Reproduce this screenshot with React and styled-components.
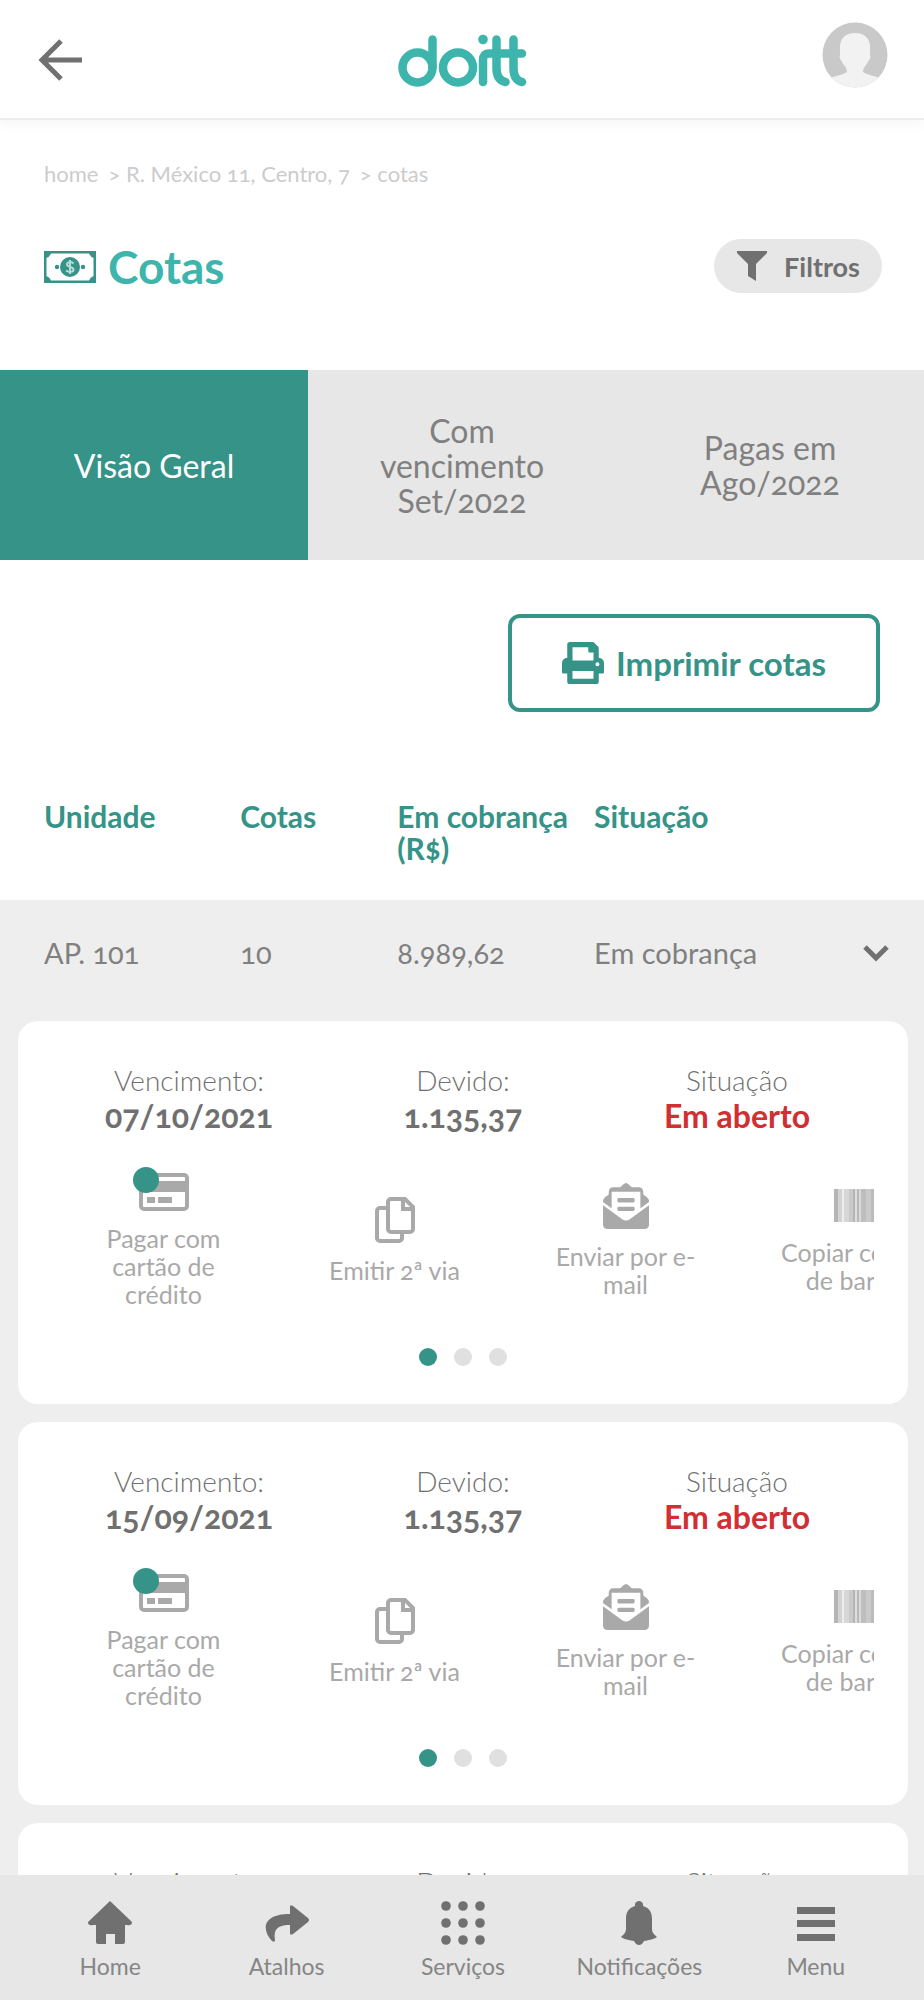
import React from 'react';
import styled, { createGlobalStyle } from 'styled-components';

const GlobalStyle = createGlobalStyle`
  * { box-sizing: border-box; }

  body {
    margin: 0;
    background: #fff;
    color: #707070;
    font-family: Lato, "Open Sans", sans-serif;
    font-variant-numeric: oldstyle-nums;
  }

  button {
    font-family: inherit;
    font-variant-numeric: inherit;
    cursor: pointer;
  }
`;

const Page = styled.div`
  height: 100vh;
  display: flex;
  flex-direction: column;
  overflow: hidden;
`;

const Header = styled.header`
  flex: none;
  height: 120px;
  padding: 4px 36px 0;
  display: grid;
  grid-template-columns: 1fr auto 1fr;
  align-items: center;
  border-bottom: 2px solid #ececec;
  box-shadow: 0 4px 12px rgba(0, 0, 0, 0.04);
`;

const IconButton = styled.button`
  display: flex;
  width: max-content;
  padding: 0;
  border: 0;
  background: none;
  color: inherit;
`;

const ProfileButton = styled(IconButton)`
  justify-self: end;
  margin-bottom: 12px;
`;

const Content = styled.main`
  flex: 1;
  min-height: 0;
  overflow: hidden;
`;

const Breadcrumb = styled.nav`
  display: flex;
  gap: 10px;
  padding: 38px 44px 0;
  font-size: 22px;
  font-weight: 400;
  line-height: 32px;
  color: #ccc;

  a {
    color: inherit;
    text-decoration: none;
  }
`;

const TitleRow = styled.div`
  display: flex;
  align-items: center;
  justify-content: space-between;
  padding: 48px 42px 0 44px;
`;

const Title = styled.h1`
  display: flex;
  align-items: center;
  gap: 12px;
  margin: 0;
  padding-top: 2px;
  font-size: 46px;
  font-weight: 700;
  line-height: 54px;
  color: #3eb5ac;
`;

const FilterButton = styled.button`
  display: flex;
  align-items: center;
  gap: 16px;
  height: 54px;
  padding: 0 22px;
  border: 0;
  border-radius: 27px;
  background: #e7e7e7;
  color: #707070;
  font-size: 27px;
  font-weight: 700;
`;

const Tabs = styled.div`
  display: grid;
  grid-template-columns: repeat(3, 1fr);
  margin-top: 76px;
  background: #e7e7e7;
`;

const Tab = styled.button`
  min-height: 190px;
  padding: 0 64px;
  border: 0;
  background: ${(props) => (props.$active ? '#359388' : 'transparent')};
  color: ${(props) => (props.$active ? '#fff' : '#808080')};
  font-size: 32px;
  font-weight: 400;
  line-height: 35px;
`;

const Actions = styled.div`
  display: flex;
  justify-content: flex-end;
  padding: 54px 44px 0;
`;

const PrintButton = styled.button`
  display: flex;
  align-items: center;
  gap: 12px;
  height: 98px;
  padding: 0 50px;
  border: 4px solid #359388;
  border-radius: 12px;
  background: #fff;
  color: #359388;
  font-size: 33px;
  font-weight: 700;
`;

const Table = styled.table`
  width: 100%;
  margin-top: 76px;
  border-collapse: collapse;
  table-layout: fixed;
  font-size: 29px;
  line-height: 32px;
  text-align: left;

  th,
  td {
    padding: 0;
    vertical-align: top;
  }

  th:first-child,
  td:first-child {
    padding-left: 44px;
  }

  th {
    height: 112px;
    padding-top: 12px;
    font-size: 30px;
    font-weight: 700;
    color: #359388;
  }

  td {
    height: 121px;
    padding-top: 37px;
    background: #eee;
    color: #808080;
  }
`;

const Toggle = styled(IconButton)`
  margin: 0 auto;
  color: #707070;
`;

const CardList = styled.section`
  display: flex;
  flex-direction: column;
  gap: 18px;
  padding: 0 16px 18px 18px;
  background: #eee;
`;

const Card = styled.article`
  height: 383px;
  flex: none;
  padding-top: 42px;
  border-radius: 20px;
  background: #fff;
`;

const Summary = styled.dl`
  display: grid;
  grid-template-columns: 1fr 1fr 1fr;
  margin: 0;
  padding: 0 34px;
  text-align: center;

  dt {
    font-size: 28px;
    font-weight: 300;
    line-height: 35px;
  }

  dd {
    margin: 0;
    font-size: 32px;
    font-weight: 700;
    line-height: 36px;
  }
`;

const Status = styled.dd`
  color: #d22f33;
`;

const Carousel = styled.div`
  display: flex;
  height: 160px;
  margin: 26px 34px 0 30px;
  overflow: hidden;
`;

const Option = styled.button`
  flex: 0 0 231px;
  display: flex;
  flex-direction: column;
  align-items: center;
  justify-content: center;
  gap: 13px;
  padding: 0 32px;
  border: 0;
  background: none;
  color: #a9a9a9;
  font-size: 25px;
  line-height: 28px;
`;

const OptionIcon = styled.span`
  position: relative;
  display: flex;
`;

const Badge = styled.span`
  position: absolute;
  top: -6px;
  left: -6px;
  width: 26px;
  height: 26px;
  border-radius: 50%;
  background: #359388;
`;

const Dots = styled.div`
  display: flex;
  justify-content: center;
  gap: 17px;
  margin-top: 28px;
`;

const Dot = styled.button`
  width: 18px;
  height: 18px;
  padding: 0;
  border: 0;
  border-radius: 50%;
  background: ${(props) => (props.$active ? '#359388' : '#e0e0e0')};
`;

const BottomNav = styled.nav`
  flex: none;
  display: grid;
  grid-template-columns: repeat(5, 1fr);
  height: 125px;
  padding: 26px 20px 0 22px;
  background: #e7e7e7;
`;

const NavItem = styled.a`
  display: flex;
  flex-direction: column;
  align-items: center;
  gap: 5px;
  color: #858585;
  font-size: 23px;
  line-height: 32px;
  text-decoration: none;

  svg {
    color: #707070;
  }
`;

function Logo() {
  return (
    <svg width="130" height="54" viewBox="0 0 130 54" fill="none" stroke="#3eb5ac" strokeWidth="8.500" strokeLinecap="round" role="img" aria-label="doitt">
      <circle cx="20.500" cy="33.500" r="15" />
      <path d="M35.500 5.500V33" />
      <circle cx="61" cy="33.500" r="15" />
      <path d="M86 48V26Q86 19.500 92 19.500H125M99.500 5.500V34Q99.500 46 108.500 48M116.500 5.500V34Q116.500 46 125 48" />
      <circle cx="86" cy="5.500" r="4.800" fill="#3eb5ac" stroke="none" />
    </svg>
  );
}

function BackArrow() {
  return (
    <svg width="48" height="44" viewBox="0 0 48 44" fill="none" stroke="currentColor" strokeWidth="5">
      <path d="M46 21H6M25 2L6 21L25 40" />
    </svg>
  );
}

function Avatar() {
  return (
    <svg width="66" height="66" viewBox="0 0 66 66">
      <defs>
        <clipPath id="avatar-clip"><circle cx="33" cy="33" r="32.500" /></clipPath>
      </defs>
      <g clipPath="url(#avatar-clip)">
        <path fill="#c9c9c9" d="M0 0H66V66H0z" />
        <path fill="#f2f2f2" d="M33 11c-10 0-15 6-15 14v8c-1 2 0 4 1 5 2 5 6 7 6 12-4 3-13 4-19 7v11h54V57c-6-3-15-4-19-7 0-5 4-7 6-12 1-1 2-3 1-5v-8c0-8-5-14-15-14z" />
      </g>
    </svg>
  );
}

function MoneyIcon() {
  return (
    <svg width="52" height="32" viewBox="0 0 52 32" fill="none" stroke="#359388">
      <path strokeWidth="2.500" d="M1.250 1.250H50.750V30.750H1.250z" />
      <path fill="#359388" stroke="none" d="M2 2h5q-1 4-5 5zM50 2h-5q1 4 5 5zM2 30h5q-1-4-5-5zM50 30h-5q1-4 5-5z" />
      <circle cx="26" cy="16" r="10" fill="#359388" stroke="none" />
      <path stroke="#b9dcd8" strokeWidth="2" d="M29.500 12.500c-2-2-6.500-2-6.500 1s6.500 2 6.500 5-4.500 3-7.500 1M26 9v14" />
      <circle cx="13" cy="16" r="2.200" fill="#359388" stroke="none" />
      <circle cx="39" cy="16" r="2.200" fill="#359388" stroke="none" />
    </svg>
  );
}

function FunnelIcon() {
  return (
    <svg width="32" height="32" viewBox="0 0 32 32" fill="currentColor">
      <path d="M1 1H31V3L20 14V31L12 26V14L1 3z" />
    </svg>
  );
}

function PrinterIcon() {
  return (
    <svg width="42" height="42" viewBox="0 0 512 512" fill="currentColor">
      <path d="M448 192V77a32 32 0 0 0-9-22L393 9a32 32 0 0 0-22-9H96a32 32 0 0 0-32 32v160a64 64 0 0 0-64 64v112a16 16 0 0 0 16 16h48v96a32 32 0 0 0 32 32h320a32 32 0 0 0 32-32v-96h48a16 16 0 0 0 16-16V256a64 64 0 0 0-64-64zm-64 256H128v-96h256zm0-224H128V64h192v48a16 16 0 0 0 16 16h48zm48 72a24 24 0 1 1 24-24 24 24 0 0 1-24 24z" />
    </svg>
  );
}

function CardIcon() {
  return (
    <svg width="50" height="38" viewBox="0 0 50 38" fill="none" stroke="currentColor">
      <rect x="2" y="2" width="46" height="34" rx="3" strokeWidth="4" />
      <path fill="currentColor" stroke="none" d="M2 8H48V19H2zM8 24h8v6H8zM19 24h14v6H19z" />
    </svg>
  );
}

function CopyIcon() {
  return (
    <svg width="40" height="46" viewBox="0 0 40 46" fill="none" stroke="currentColor" strokeWidth="4">
      <path d="M12 11H5a3 3 0 0 0-3 3V41a3 3 0 0 0 3 3H24a3 3 0 0 0 3-3V36" />
      <path d="M16 2H30L38 10V32a3 3 0 0 1-3 3H16a3 3 0 0 1-3-3V5a3 3 0 0 1 3-3zM28 2V12H38" />
    </svg>
  );
}

function MailIcon() {
  return (
    <svg width="46" height="46" viewBox="0 0 512 512" fill="currentColor">
      <path d="M176 216h160a16 16 0 0 0 16-16v-16a16 16 0 0 0-16-16H176a16 16 0 0 0-16 16v16a16 16 0 0 0 16 16zm-16 80a16 16 0 0 0 16 16h160a16 16 0 0 0 16-16v-16a16 16 0 0 0-16-16H176a16 16 0 0 0-16 16zm96 121a64 64 0 0 1-38-12L0 247v217a48 48 0 0 0 48 48h416a48 48 0 0 0 48-48V247L294 405a64 64 0 0 1-38 12zm238-254c-9-7-17-13-46-34V96a48 48 0 0 0-48-48h-78l-9-7C302 33 274 0 256 0s-46 33-57 41l-9 7h-78a48 48 0 0 0-48 48v33c-28 21-37 27-46 34a48 48 0 0 0-18 38v11l96 69V96h320v185l96-69v-11a48 48 0 0 0-18-38z" />
    </svg>
  );
}

const bars = [[0, 4, '#b5b5b5'], [4, 4, '#d3d3d3'], [8, 2, '#ededed'], [10, 5, '#d7d7d7'], [15, 4, '#cacaca'], [19, 2, '#b5b5b5'], [21, 2, '#dedede'], [23, 2, '#b9b9b9'], [25, 2, '#dadada'], [27, 5, '#bebebe'], [32, 5, '#cacaca'], [37, 3, '#bbb'], [40, 2, '#e7e7e7'], [42, 4, '#b5b5b5']];

function BarcodeIcon() {
  return (
    <svg width="46" height="38" viewBox="0 0 46 38">
      {bars.map(([x, width, fill]) => <rect key={x} x={x} y="2" width={width} height="33" fill={fill} />)}
    </svg>
  );
}

function Chevron() {
  return (
    <svg width="26" height="32" viewBox="0 0 26 32" fill="none" stroke="currentColor" strokeWidth="5">
      <path d="M2 10L13 21L24 10" />
    </svg>
  );
}

const navIcons = {
  home: <path d="M22 0L44 21Q44 25 39 24H37V41Q37 43 35 43H27V33H18V43H10Q8 43 8 41V24H5Q0 25 0 21z" />,
  share: <path d="M25 6Q25 3 28 5L43 17Q45 19 43 21L28 33Q25 35 25 32V24C14 24 8 27 10 39Q10 42 7 40C-4 28-2 13 25 13z" />,
  grid: [5, 22, 39].map((y) => [5, 22, 39].map((x) => <circle key={`${x}-${y}`} cx={x} cy={y} r="4.800" />)),
  bell: <path d="M22 0a4 4 0 0 1 4 5c7 2 9 7 9 13v10c0 4 3 6 5 8-4 3-9 3-13 4q-2 4-5 4t-5-4C13 39 8 39 4 36c2-2 5-4 5-8V18C9 12 11 7 18 5a4 4 0 0 1 4-5z" />,
  menu: <path d="M3 6H41V13H3zM3 19H41V26H3zM3 33H41V40H3z" />,
};

const navItems = [
  { icon: 'home', label: 'Home' },
  { icon: 'share', label: 'Atalhos' },
  { icon: 'grid', label: 'Serviços' },
  { icon: 'bell', label: 'Notificações' },
  { icon: 'menu', label: 'Menu' },
];

const options = [
  { icon: <CardIcon />, label: 'Pagar com cartão de crédito', badge: true },
  { icon: <CopyIcon />, label: 'Emitir 2ª via' },
  { icon: <MailIcon />, label: 'Enviar por e-mail' },
  { icon: <BarcodeIcon />, label: 'Copiar código de barras' },
];

const quotas = [
  { due: '07/10/2021', amount: '1.135,37' },
  { due: '15/09/2021', amount: '1.135,37' },
  { due: '15/08/2021', amount: '1.135,37' },
];

function QuotaCard({ due, amount }) {
  return (
    <Card>
      <Summary>
        <div>
          <dt>Vencimento:</dt>
          <dd>{due}</dd>
        </div>
        <div>
          <dt>Devido:</dt>
          <dd>{amount}</dd>
        </div>
        <div>
          <dt>Situação</dt>
          <Status>Em aberto</Status>
        </div>
      </Summary>
      <Carousel>
        {options.map((option) => (
          <Option type="button" key={option.label}>
            <OptionIcon>
              {option.icon}
              {option.badge && <Badge />}
            </OptionIcon>
            {option.label}
          </Option>
        ))}
      </Carousel>
      <Dots>
        {[1, 2, 3].map((page) => (
          <Dot type="button" key={page} $active={page === 1} aria-label={`Página ${page}`} />
        ))}
      </Dots>
    </Card>
  );
}

function App() {
  return (
    <Page>
      <GlobalStyle />
      <Header>
        <IconButton type="button" aria-label="Voltar"><BackArrow /></IconButton>
        <Logo />
        <ProfileButton type="button" aria-label="Perfil"><Avatar /></ProfileButton>
      </Header>
      <Content>
        <Breadcrumb>
          <a href="#home">home</a>
          <a href="#condominio">&gt; R. México 11, Centro, 7</a>
          <a href="#cotas">&gt; cotas</a>
        </Breadcrumb>
        <TitleRow>
          <Title><MoneyIcon />Cotas</Title>
          <FilterButton type="button"><FunnelIcon />Filtros</FilterButton>
        </TitleRow>
        <Tabs role="tablist">
          <Tab type="button" role="tab" aria-selected="true" $active>Visão Geral</Tab>
          <Tab type="button" role="tab" aria-selected="false">Com vencimento Set/2022</Tab>
          <Tab type="button" role="tab" aria-selected="false">Pagas em Ago/2022</Tab>
        </Tabs>
        <Actions>
          <PrintButton type="button"><PrinterIcon />Imprimir cotas</PrintButton>
        </Actions>
        <Table>
          <colgroup>
            <col width="26%" />
            <col width="17%" />
            <col width="21.3%" />
            <col />
            <col width="96" />
          </colgroup>
          <thead>
            <tr>
              <th>Unidade</th>
              <th>Cotas</th>
              <th>Em cobrança (R$)</th>
              <th>Situação</th>
              <th aria-label="Detalhes" />
            </tr>
          </thead>
          <tbody>
            <tr>
              <td>AP. 101</td>
              <td>10</td>
              <td>8.989,62</td>
              <td>Em cobrança</td>
              <td><Toggle type="button" aria-label="Detalhes"><Chevron /></Toggle></td>
            </tr>
          </tbody>
        </Table>
        <CardList>
          {quotas.map((quota) => <QuotaCard key={quota.due} {...quota} />)}
        </CardList>
      </Content>
      <BottomNav>
        {navItems.map((item) => (
          <NavItem href={`#${item.icon}`} key={item.icon}>
            <svg width="44" height="44" viewBox="0 0 44 44" fill="currentColor">{navIcons[item.icon]}</svg>
            {item.label}
          </NavItem>
        ))}
      </BottomNav>
    </Page>
  );
}

export default App;
